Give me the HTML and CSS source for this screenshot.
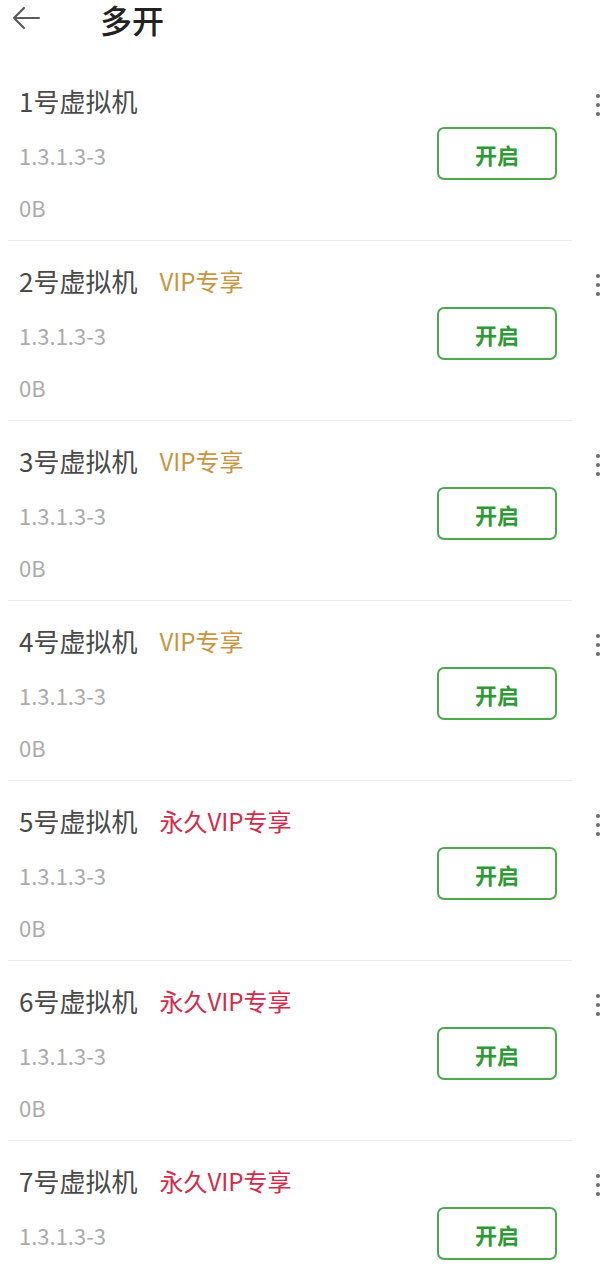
FILE: index.html
```html
<!DOCTYPE html>
<html lang="zh-CN">
  <head>
    <meta charset="UTF-8" />
    <title>多开</title>
    <link rel="stylesheet" href="styles.css">
  </head>
  <body>
    <header class="top-bar">
      <svg class="back-icon" width="30" height="24" viewBox="0 0 30 24">
        <path d="M28 12H3M13 2L3 12l10 10" fill="none" stroke="#5a5a5a" stroke-width="2.2" stroke-linecap="round" stroke-linejoin="round" />
      </svg>
      <h1 class="page-title">多开</h1>
    </header>

    <main class="vm-list">
      <div class="vm-item">
        <div class="vm-main">
          <div class="vm-info">
            <div class="vm-name">1号虚拟机</div>
            <div class="vm-version">1.3.1.3-3</div>
            <div class="vm-size">0B</div>
          </div>
          <button class="start-btn">开启</button>
        </div>
        <div class="vm-more"><span></span><span></span><span></span></div>
      </div>

      <div class="vm-item">
        <div class="vm-main">
          <div class="vm-info">
            <div class="vm-name">2号虚拟机<span class="tag tag-vip">VIP专享</span></div>
            <div class="vm-version">1.3.1.3-3</div>
            <div class="vm-size">0B</div>
          </div>
          <button class="start-btn">开启</button>
        </div>
        <div class="vm-more"><span></span><span></span><span></span></div>
      </div>

      <div class="vm-item">
        <div class="vm-main">
          <div class="vm-info">
            <div class="vm-name">3号虚拟机<span class="tag tag-vip">VIP专享</span></div>
            <div class="vm-version">1.3.1.3-3</div>
            <div class="vm-size">0B</div>
          </div>
          <button class="start-btn">开启</button>
        </div>
        <div class="vm-more"><span></span><span></span><span></span></div>
      </div>

      <div class="vm-item">
        <div class="vm-main">
          <div class="vm-info">
            <div class="vm-name">4号虚拟机<span class="tag tag-vip">VIP专享</span></div>
            <div class="vm-version">1.3.1.3-3</div>
            <div class="vm-size">0B</div>
          </div>
          <button class="start-btn">开启</button>
        </div>
        <div class="vm-more"><span></span><span></span><span></span></div>
      </div>

      <div class="vm-item">
        <div class="vm-main">
          <div class="vm-info">
            <div class="vm-name">5号虚拟机<span class="tag tag-forever">永久VIP专享</span></div>
            <div class="vm-version">1.3.1.3-3</div>
            <div class="vm-size">0B</div>
          </div>
          <button class="start-btn">开启</button>
        </div>
        <div class="vm-more"><span></span><span></span><span></span></div>
      </div>

      <div class="vm-item">
        <div class="vm-main">
          <div class="vm-info">
            <div class="vm-name">6号虚拟机<span class="tag tag-forever">永久VIP专享</span></div>
            <div class="vm-version">1.3.1.3-3</div>
            <div class="vm-size">0B</div>
          </div>
          <button class="start-btn">开启</button>
        </div>
        <div class="vm-more"><span></span><span></span><span></span></div>
      </div>

      <div class="vm-item">
        <div class="vm-main">
          <div class="vm-info">
            <div class="vm-name">7号虚拟机<span class="tag tag-forever">永久VIP专享</span></div>
            <div class="vm-version">1.3.1.3-3</div>
          </div>
          <button class="start-btn">开启</button>
        </div>
        <div class="vm-more"><span></span><span></span><span></span></div>
      </div>
    </main>
  </body>
</html>
```

FILE: styles.css
```css
body {
  margin: 0;
  background-color: #ffffff;
  font-family: "Noto Sans CJK SC", "Noto Sans", sans-serif;
  overflow: hidden;
}

.top-bar {
  height: 61px;
  display: flex;
  align-items: flex-start;
}

.back-icon {
  margin: 6px 0 0 11px;
}

.page-title {
  margin: 0 0 0 59px;
  font-size: 32px;
  font-weight: 500;
  line-height: 38px;
  color: #222222;
}

.vm-list {
  display: flex;
  flex-direction: column;
}

.vm-item {
  display: flex;
  padding-left: 8px;
}

.vm-main {
  width: 564px;
  height: 180px;
  box-sizing: border-box;
  padding: 0 15px 0 11px;
  border-bottom: 1px solid #eeeeee;
  display: flex;
  justify-content: space-between;
  align-items: center;
}

.vm-info {
  align-self: flex-start;
  padding-top: 22px;
}

.vm-name {
  font-size: 26px;
  line-height: 36px;
  color: #4a4a4a;
  display: flex;
  align-items: center;
}

.tag {
  margin-left: 22px;
  font-size: 24px;
}

.tag-vip {
  color: #c99540;
}

.tag-forever {
  color: #d42a4b;
}

.vm-version {
  margin-top: 18px;
  font-size: 22px;
  line-height: 36px;
  color: #ababab;
}

.vm-size {
  margin-top: 16px;
  font-size: 22px;
  line-height: 36px;
  color: #ababab;
}

.start-btn {
  width: 120px;
  height: 53px;
  margin-top: 6px;
  border: 2px solid #4caa4c;
  border-radius: 7px;
  background-color: #ffffff;
  color: #2d9a34;
  font-family: inherit;
  font-size: 22px;
  font-weight: bold;
  padding: 0;
}

.vm-more {
  flex: 1;
  display: flex;
  flex-direction: column;
  align-items: center;
  gap: 5px;
  padding-top: 33px;
  padding-left: 19px;
}

.vm-more span {
  width: 4px;
  height: 4px;
  border-radius: 50%;
  background-color: #6a6a6a;
}
```
